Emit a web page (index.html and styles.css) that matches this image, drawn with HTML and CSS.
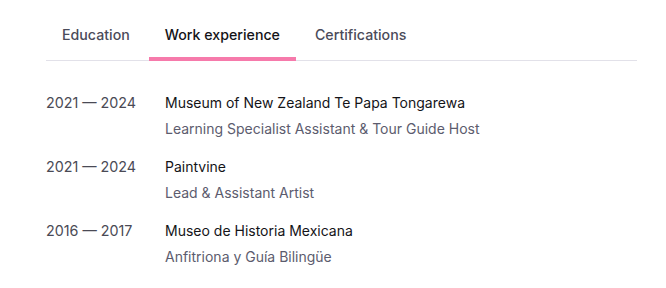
FILE: index.html
```html
<!DOCTYPE html>
<html>
<head>
<meta charset="utf-8">
<link rel="stylesheet" href="styles.css">
</head>
<body>
<div class="wrap">
  <nav class="tabs">
    <div class="tab">Education</div>
    <div class="tab active">Work experience</div>
    <div class="tab">Certifications</div>
  </nav>
  <div class="list">
    <div class="row">
      <div class="date">2021 — 2024</div>
      <div class="info">
        <div class="title">Museum of New Zealand Te Papa Tongarewa</div>
        <div class="role">Learning Specialist Assistant &amp; Tour Guide Host</div>
      </div>
    </div>
    <div class="row">
      <div class="date">2021 — 2024</div>
      <div class="info">
        <div class="title">Paintvine</div>
        <div class="role">Lead &amp; Assistant Artist</div>
      </div>
    </div>
    <div class="row">
      <div class="date">2016 — 2017</div>
      <div class="info">
        <div class="title">Museo de Historia Mexicana</div>
        <div class="role">Anfitriona y Guía Bilingüe</div>
      </div>
    </div>
  </div>
</div>
</body>
</html>
```
FILE: styles.css
```css
* { box-sizing: border-box; }
body {
  margin: 0;
  background: #fff;
  font-family: Inter, "Noto Sans", sans-serif;
  -webkit-font-smoothing: antialiased;
}
.wrap {
  padding: 16px 29px 0 46px;
}
.tabs {
  display: flex;
  gap: 3px;
  border-bottom: 1px solid #e2e1e9;
}
.tab {
  padding: 10px 16px 13px;
  font-size: 14.2px;
  font-weight: 500;
  color: #4b4b5a;
  border-bottom: 4px solid transparent;
  margin-bottom: -1px;
  line-height: 18px;
}
.tab.active {
  color: #141418;
  border-bottom-color: #f67aab;
}
.list {
  padding-top: 32px;
  display: flex;
  flex-direction: column;
  gap: 18px;
}
.row {
  display: flex;
}
.date {
  width: 119px;
  flex: none;
  font-size: 14.3px;
  color: #4a4a55;
  line-height: 20px;
}
.info {
  display: flex;
  flex-direction: column;
  gap: 6px;
}
.title {
  font-size: 14px;
  color: #141418;
  line-height: 20px;
}
.role {
  font-size: 14px;
  color: #5c5c6e;
  line-height: 20px;
}
```
